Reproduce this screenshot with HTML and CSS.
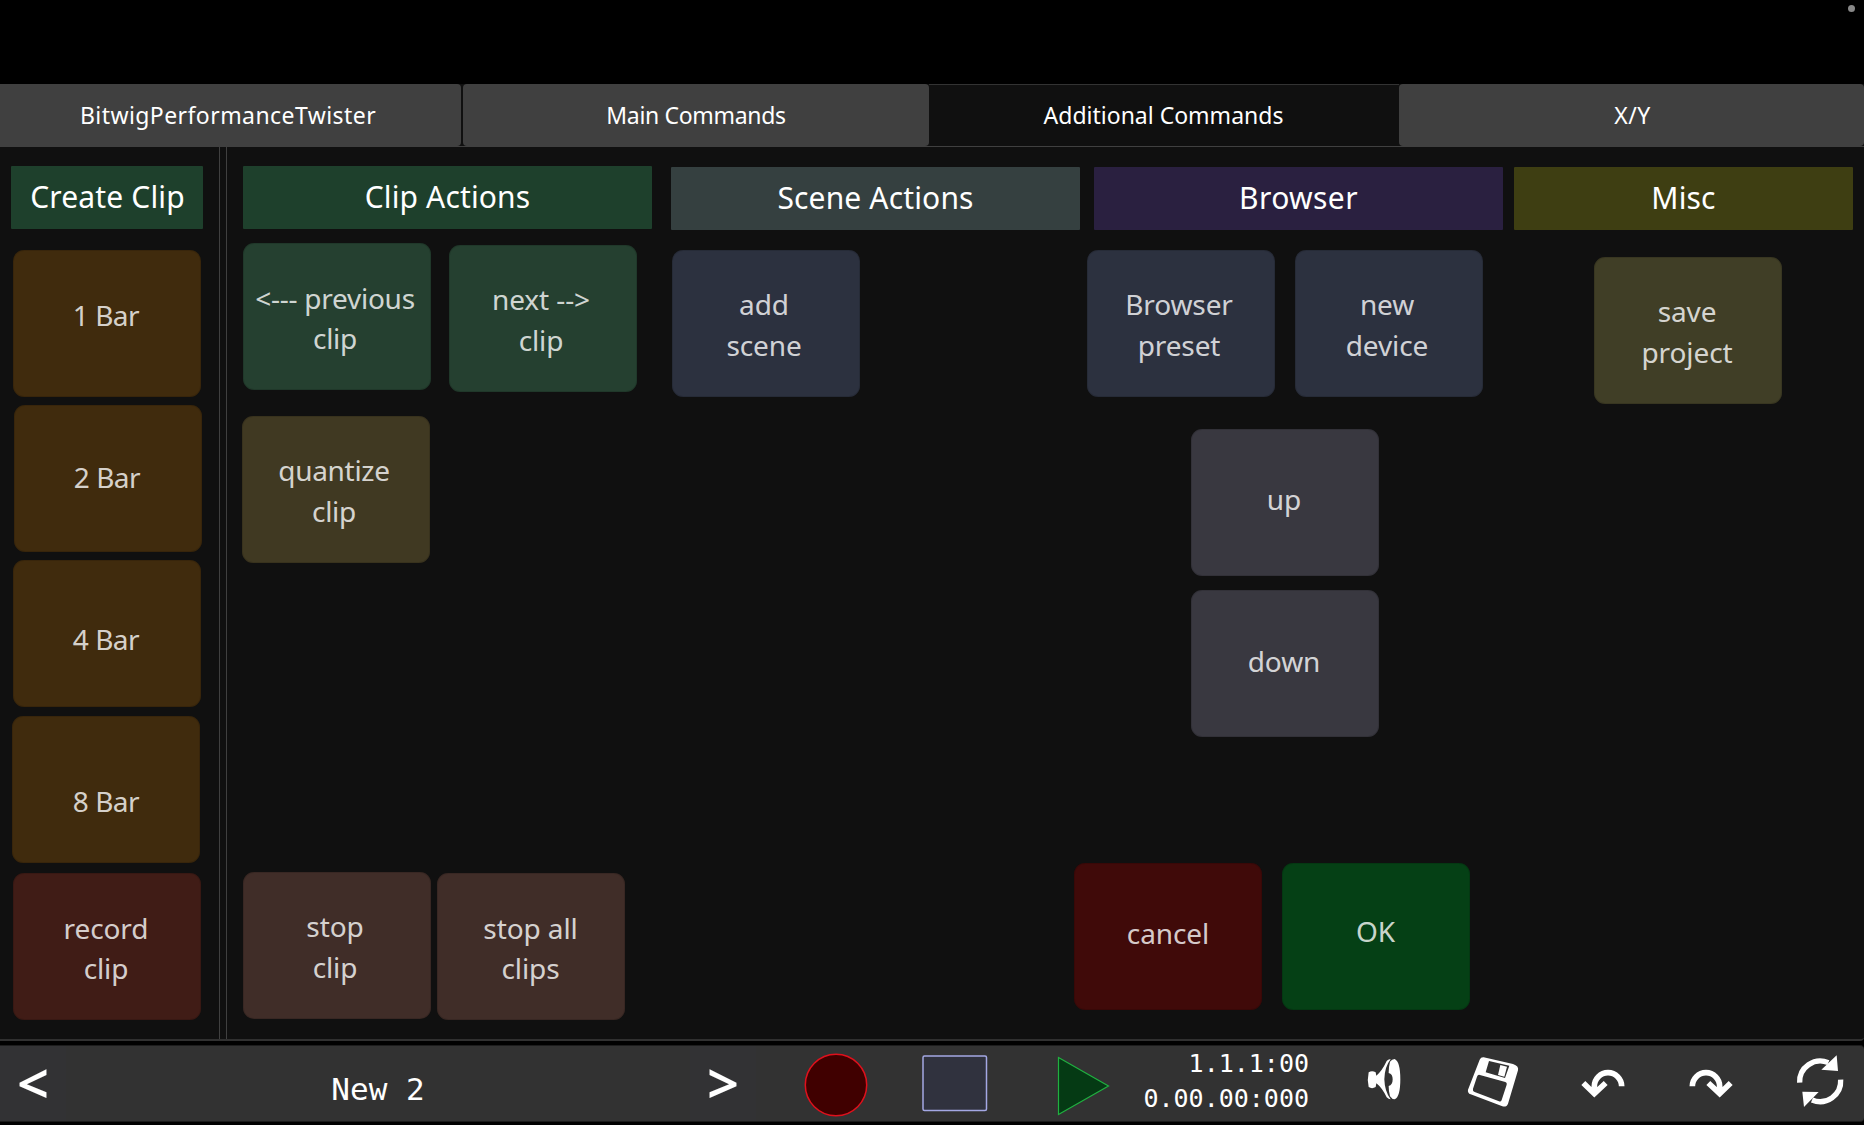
FILE: index.html
```html
<!DOCTYPE html>
<html lang="en">
<head>
<meta charset="utf-8">
<title>Bitwig Controller</title>
<link rel="stylesheet" href="styles.css">
</head>
<body>
<div class="status"><span class="status-dot"></span></div>

<nav class="tabs">
  <div class="tab tab-twister">BitwigPerformanceTwister</div>
  <div class="tab tab-main">Main Commands</div>
  <div class="tab tab-additional active">Additional Commands</div>
  <div class="tab tab-xy">X/Y</div>
</nav>

<main class="stage">
  <aside class="create">
    <h2 class="heading green">Create Clip</h2>
    <div role="button" class="pad bar bar-1">1 Bar</div>
    <div role="button" class="pad bar bar-2">2 Bar</div>
    <div role="button" class="pad bar bar-4">4 Bar</div>
    <div role="button" class="pad bar bar-8">8 Bar</div>
    <div role="button" class="pad record">record<br>clip</div>
  </aside>
  <div class="gutter"></div>

  <section class="column clips">
    <h2 class="heading green">Clip Actions</h2>
    <div class="row row-nav">
      <div role="button" class="pad clip previous">&lt;--- previous<br>clip</div>
      <div role="button" class="pad clip next">next --&gt;<br>clip</div>
    </div>
    <div class="row row-quantize">
      <div role="button" class="pad quantize">quantize<br>clip</div>
    </div>
    <div class="row row-stop">
      <div role="button" class="pad stop stop-one">stop<br>clip</div>
      <div role="button" class="pad stop stop-all">stop all<br>clips</div>
    </div>
  </section>

  <section class="column scenes">
    <h2 class="heading slate">Scene Actions</h2>
    <div class="row row-scene">
      <div role="button" class="pad blue">add<br>scene</div>
    </div>
  </section>

  <section class="column browser">
    <h2 class="heading violet">Browser</h2>
    <div class="row row-browse">
      <div role="button" class="pad blue">Browser<br>preset</div>
      <div role="button" class="pad blue">new<br>device</div>
    </div>
    <div class="row row-up">
      <div role="button" class="pad grey up">up</div>
    </div>
    <div class="row row-down">
      <div role="button" class="pad grey down">down</div>
    </div>
    <div class="row row-confirm">
      <div role="button" class="pad cancel">cancel</div>
      <div role="button" class="pad ok">OK</div>
    </div>
  </section>

  <section class="column misc">
    <h2 class="heading olive">Misc</h2>
    <div class="row row-save">
      <div role="button" class="pad save">save<br>project</div>
    </div>
  </section>
</main>

<footer class="transport">
  <div class="arrow arrow-prev">&lt;</div>
  <div class="project-name">New 2</div>
  <div class="arrow arrow-next">&gt;</div>
  <svg class="shape rec" width="64" height="64" viewBox="0 0 64 64"><circle cx="32" cy="32" r="30.7"/></svg>
  <svg class="shape halt" width="66" height="58" viewBox="0 0 66 58"><rect x="1" y="1" width="63.5" height="54.5" rx="1.5"/></svg>
  <svg class="shape play" width="54" height="60" viewBox="0 0 54 60"><path d="M1.5 1.5 51.5 30 1.5 58.5Z"/></svg>
  <div class="time">1.1.1:00<br>0.00.00:000</div>
  <svg class="icon speaker" width="36" height="44" viewBox="110 66 108 132">
    <path d="M118 112Q128 106 139 112L141 122Q158 108 172 78Q178 71 184 73Q166 95 165 133Q166 170 184 193Q178 193 172 187Q158 158 141 145L139 156Q128 163 118 156Q113 134 118 112Z"/>
    <path d="M182 80Q188 72 196 72Q213 80 213 133Q213 186 196 193Q188 193 182 184Q178 170 178 153Q190 150 190 133Q190 117 178 114Q178 95 182 80Z"/>
  </svg>
  <svg class="icon floppy" width="54" height="54" viewBox="411 60 162 162">
    <path fill-rule="evenodd" d="M464 67L552 87Q570 93 567 106L537 206Q533 217 520 214L425 178Q415 174 417 164L452 74Q456 66 464 67ZM480 78L470 112 528 129 541 92ZM450 119Q446 119 444 125L432 161Q430 168 437 171L510 199Q516 201 518 195L533 149Q535 143 529 141Z"/>
    <path d="M514 90 534 95 526 125 507 120Z"/>
  </svg>
  <svg class="icon undo" width="48" height="32" viewBox="58 96 144 96">
    <path d="M186 154A41 41 0 0 0 104 154V172M71 144 104 176 138 144"/>
  </svg>
  <svg class="icon redo" width="48" height="32" viewBox="382 96 144 96">
    <path d="M398 154A41 41 0 0 1 480 154V172M513 144 480 176 446 144"/>
  </svg>
  <svg class="icon refresh" width="50" height="54" viewBox="708 58 150 162">
    <path class="ring" d="M722 144A62 62 0 0 1 808 84M845 135A62 62 0 0 1 759 196"/>
    <path d="M833 62 837 109 787 105ZM730 171 779 172 735 217Z"/>
  </svg>
</footer>
</body>
</html>
```
FILE: styles.css
```css
* {
  box-sizing: border-box;
}

body {
  margin: 0;
  width: 1864px;
  height: 1125px;
  overflow: hidden;
  background: #000;
  color: #fff;
  font-family: "Noto Sans", "Open Sans", sans-serif;
}

.status {
  display: flex;
  justify-content: flex-end;
  height: 84px;
  padding: 5px 9px 0 0;
}

.status-dot {
  width: 7px;
  height: 7px;
  border-radius: 50%;
  background: #888;
}

/* Tabs */
.tabs {
  display: grid;
  grid-template-columns: 462px 467px 470px 465px;
  height: 63px;
  background: #101010;
  border-bottom: 1px solid #404040;
}

.tab {
  height: 62px;
  border-radius: 4px;
  background: #404040;
  font-size: 23px;
  line-height: 62px;
  text-align: center;
}

.tab-twister {
  margin-right: 1px;
  padding-right: 5px;
  border-radius: 0 4px 4px 0;
  letter-spacing: 0.43px;
}

.tab-main {
  margin-left: 1px;
  letter-spacing: -0.33px;
}

.tab-additional {
  padding-right: 1px;
}

.tab-xy {
  padding-left: 2px;
  letter-spacing: 0.5px;
}

.tab.active {
  background: #101010;
  border-top: 1px solid #333;
  border-radius: 0;
  line-height: 60px;
}

/* Stage */
.stage {
  display: flex;
  height: 894px;
  background: #101010;
  border-bottom: 2px solid #303030;
  border-bottom-right-radius: 4px;
}

.create {
  display: flex;
  flex-direction: column;
  width: 219px;
  padding: 19px 16px 0 11px;
}

.create .heading {
  padding-left: 1px;
}

.gutter {
  width: 8px;
  border: solid #404040;
  border-width: 0 1px;
}

.column {
  width: 409px;
  padding-top: 20px;
}

.clips {
  margin-left: 16px;
  padding-top: 19px;
}

.scenes {
  margin-left: 19px;
}

.browser {
  margin-left: 14px;
}

.misc {
  width: 339px;
  margin-left: 11px;
}

.heading {
  margin: 0;
  height: 63px;
  border-radius: 1px;
  font-size: 30px;
  font-weight: 400;
  line-height: 61px;
  letter-spacing: 0.15px;
  text-align: center;
}

.green {
  background: #1e402c;
}

.slate {
  background: #354040;
}

.violet {
  background: #2a2040;
  letter-spacing: 0.4px;
}

.olive {
  background: #3e3e12;
}

.row {
  display: flex;
  align-items: flex-start;
}

.pad {
  flex: none;
  width: 188px;
  height: 147px;
  padding: 34px 4px 0 0;
  border-radius: 11px;
  box-shadow: inset 0 0 0 1px rgba(0, 0, 0, 0.12);
  color: rgba(255, 255, 255, 0.8);
  font-size: 28px;
  line-height: 41px;
  letter-spacing: -0.1px;
  text-align: center;
  white-space: nowrap;
}

.bar {
  background: #402b0d;
  letter-spacing: -0.5px;
}

.create .pad {
  margin-left: 2px;
  padding-right: 2px;
}

.create .bar-1 {
  margin-top: 21px;
  padding-top: 45px;
}

.create .bar-2 {
  margin: 8px 0 0 3px;
  padding-top: 52px;
}

.create .bar-4 {
  margin-top: 8px;
  padding-top: 59px;
}

.create .bar-8 {
  margin: 9px 0 0 1px;
  padding: 65px 0 0;
}

.create .record {
  margin-top: 10px;
  padding-top: 35px;
  background: #401c16;
  line-height: 40px;
}

.row-nav {
  gap: 18px;
  margin-top: 14px;
}

.clip {
  background: #254030;
}

.previous {
  padding-top: 35px;
  line-height: 40px;
  letter-spacing: -0.25px;
}

.next {
  margin-top: 2px;
}

.row-quantize {
  margin: 24px 0 0 -1px;
}

.quantize {
  background: #403922;
  letter-spacing: -0.3px;
}

.row-stop {
  gap: 6px;
  margin-top: 309px;
}

.stop {
  background: #402d28;
}

.stop-all {
  margin-top: 1px;
  padding: 35px 1px 0 0;
  line-height: 40px;
}

.row-scene {
  margin: 20px 0 0 1px;
}

.row-browse {
  gap: 20px;
  margin: 20px 0 0 -7px;
}

.blue {
  background: #2c313f;
}

.row-up {
  margin: 32px 0 0 97px;
}

.row-down {
  margin: 14px 0 0 97px;
}

.grey {
  padding-right: 2px;
  background: #393840;
}

.up {
  padding-top: 50px;
}

.down {
  padding-top: 51px;
}

.row-confirm {
  gap: 20px;
  margin: 126px 0 0 -20px;
}

.cancel {
  padding: 50px 0 0;
  background: #400a09;
}

.ok {
  padding: 48px 1px 0 0;
  background: #054015;
}

.row-save {
  margin: 27px 0 0 80px;
}

.save {
  padding-right: 2px;
  background: #403e26;
}

/* Transport */
.transport {
  display: flex;
  align-items: flex-start;
  height: 77px;
  margin-top: 4px;
  border: solid #1c1c1c;
  border-width: 1px 0;
  border-radius: 0 4px 4px 0;
  background: #323232;
}

.arrow {
  width: 66px;
  height: 75px;
  background: #323234;
  font-size: 56px;
  font-weight: 600;
  line-height: 73px;
  text-align: center;
}

.project-name {
  width: 624px;
  padding-top: 24px;
  font: 31px/38px "DejaVu Sans Mono", monospace;
  text-align: center;
}

.shape {
  flex: none;
}

.rec {
  margin: 7px 0 0 48px;
  fill: #400000;
  stroke: #e0101c;
  stroke-width: 1.5;
}

.halt {
  margin: 9px 0 0 54px;
  fill: #30323e;
  stroke: #a4a8e4;
  stroke-width: 1.5;
}

.play {
  margin: 10px 0 0 69px;
  fill: #053a14;
  stroke: #20b040;
  stroke-width: 1.2;
}

.time {
  width: 180px;
  margin-left: 18px;
  font: 25px/35px "DejaVu Sans Mono", monospace;
  text-align: right;
}

.icon {
  flex: none;
  fill: #fff;
}

.speaker {
  margin: 11px 0 0 57px;
}

.floppy {
  margin: 9px 0 0 64px;
}

.undo {
  margin: 21px 0 0 59px;
}

.redo {
  margin: 21px 0 0 60px;
}

.undo,
.redo {
  fill: none;
  stroke: #fff;
  stroke-width: 17;
}

.refresh {
  margin: 8px 0 0 60px;
}

.ring {
  fill: none;
  stroke: #fff;
  stroke-width: 16;
}
```
